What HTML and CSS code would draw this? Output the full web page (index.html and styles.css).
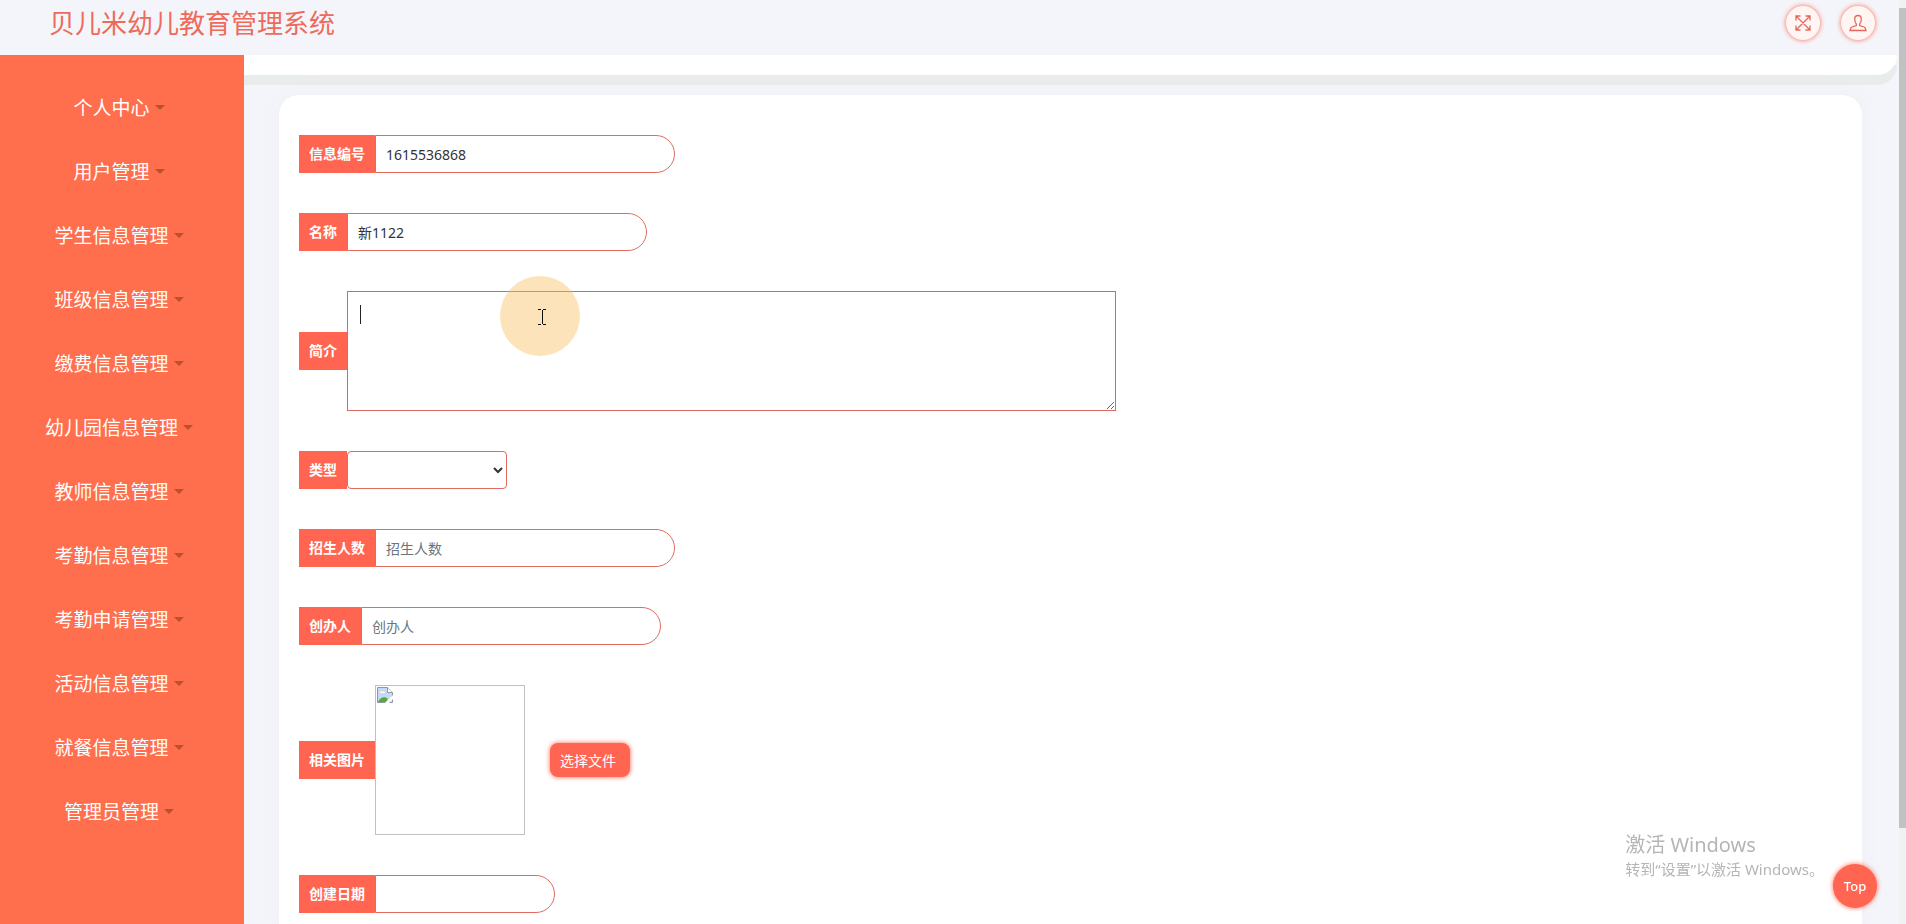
FILE: index.html
```
<!DOCTYPE html>
<html lang="zh-CN">
<head>
    <meta charset="UTF-8">
    <meta name="viewport" content="width=device-width, initial-scale=1.0">
    <title>贝儿米幼儿教育管理系统</title>
    <link rel="stylesheet" href="styles.css">
</head>
<body>
    <header class="header">
        <h1 class="brand">贝儿米幼儿教育管理系统</h1>
        <div class="header-actions">
            <button type="button" class="round-btn" aria-label="全屏">
                <svg width="16" height="16" viewBox="0 0 16 16" fill="none" stroke="currentColor" stroke-width="1.3">
                    <path d="M1.500 1.500l13 13M14.500 1.500l-13 13M1 5.500V1h4.500M10.500 1H15v4.500M15 10.500V15h-4.500M5.500 15H1v-4.500"/>
                </svg>
            </button>
            <button type="button" class="round-btn" aria-label="个人">
                <svg width="18" height="18" viewBox="0 0 18 18" fill="none" stroke="currentColor" stroke-width="1.3">
                    <path d="M9 1.500c-2.300 0-3.300 1.600-3.300 3.800 0 2 .6 3.500 1.600 4.600v1.600L3 13C1.700 13.500 1.300 14.600 1 16.500h16c-.3-1.900-.7-3-2-3.500l-4.300-1.500V9.900c1-1.100 1.600-2.600 1.600-4.600 0-2.200-1-3.800-3.300-3.800z"/>
                </svg>
            </button>
        </div>
    </header>

    <div class="wrapper">
        <nav class="sidebar">
            <a href="#" class="menu-item">个人中心</a>
            <a href="#" class="menu-item">用户管理</a>
            <a href="#" class="menu-item">学生信息管理</a>
            <a href="#" class="menu-item">班级信息管理</a>
            <a href="#" class="menu-item">缴费信息管理</a>
            <a href="#" class="menu-item">幼儿园信息管理</a>
            <a href="#" class="menu-item">教师信息管理</a>
            <a href="#" class="menu-item">考勤信息管理</a>
            <a href="#" class="menu-item">考勤申请管理</a>
            <a href="#" class="menu-item">活动信息管理</a>
            <a href="#" class="menu-item">就餐信息管理</a>
            <a href="#" class="menu-item">管理员管理</a>
        </nav>

        <main class="content">
            <div class="topbar"></div>

            <form class="card">
                <div class="form-group">
                    <label for="number">信息编号</label>
                    <input type="text" id="number" value="1615536868">
                </div>
                <div class="form-group">
                    <label for="name">名称</label>
                    <input type="text" id="name" value="新1122">
                </div>
                <div class="form-group">
                    <label for="intro">简介</label>
                    <textarea id="intro"></textarea>
                    <span class="caret"></span>
                    <span class="pointer">
                        <svg width="8" height="16" viewBox="0 0 8 16" fill="none" stroke="#111" shape-rendering="crispEdges">
                            <path d="M0 .5h3M5 .5h3M4 1v14M0 15.500h3M5 15.500h3"/>
                        </svg>
                    </span>
                </div>
                <div class="form-group">
                    <label for="type">类型</label>
                    <select id="type">
                        <option value=""></option>
                    </select>
                </div>
                <div class="form-group">
                    <label for="count">招生人数</label>
                    <input type="text" id="count" placeholder="招生人数">
                </div>
                <div class="form-group">
                    <label for="founder">创办人</label>
                    <input type="text" id="founder" placeholder="创办人">
                </div>
                <div class="form-group">
                    <label for="upload">相关图片</label>
                    <div class="preview">
                        <svg width="16" height="16" viewBox="0 0 16 16">
                            <path d="M.5.5h10l5 5v10H.5z" fill="#c6d8f5" stroke="#8f989f"/>
                            <path d="M10.500.5v5h5" fill="#fff" stroke="#8f989f"/>
                            <path d="M3 6c0-2 2-2 2.500-1C7 4 8 5 8 6z" fill="#fff"/>
                            <path d="M1 15c2-5 7-6 10-3l-2 3z" fill="#58a83d"/>
                            <path d="M8 16l8-8v4l-4 4z" fill="#fff"/>
                        </svg>
                    </div>
                    <button type="button" id="upload" class="upload-btn">选择文件</button>
                </div>
                <div class="form-group">
                    <label for="date">创建日期</label>
                    <input type="text" id="date" class="date">
                </div>
            </form>
        </main>
    </div>

    <div class="watermark">
        <p class="watermark-title">激活 Windows</p>
        <p>转到“设置”以激活 Windows。</p>
    </div>
    <button type="button" class="top-btn">Top</button>
    <div class="scrollbar"><div class="thumb"></div></div>
</body>
</html>
```

FILE: styles.css
```
* {
    box-sizing: border-box;
}

body {
    margin: 0;
    min-height: 100vh;
    display: flex;
    flex-direction: column;
    background: #f4f5fa;
    color: #333;
    font-family: "Noto Sans", "Noto Sans CJK SC", sans-serif;
    font-size: 14px;
}

button, input, select, textarea {
    font-family: inherit;
    font-size: 14px;
}

.header {
    flex: none;
    height: 55px;
    padding: 0 31px 10px 49px;
    display: flex;
    align-items: center;
    justify-content: space-between;
}

.brand {
    margin: 0;
    font-size: 26px;
    font-weight: 400;
    line-height: 40px;
    color: #ee6a5b;
}

.header-actions {
    display: flex;
    gap: 21px;
}

.round-btn {
    width: 34px;
    height: 34px;
    padding: 0;
    display: flex;
    align-items: center;
    justify-content: center;
    border: none;
    border-radius: 50%;
    background: #fff5f2;
    color: #e2695c;
    box-shadow: 0 0 5px #ff6550;
}

.wrapper {
    flex: 1;
    display: flex;
}

.sidebar {
    flex: none;
    width: 244px;
    padding: 20px 6px 0 0;
    background: #ff6e4d;
}

.menu-item {
    display: flex;
    align-items: center;
    justify-content: center;
    gap: 5px;
    height: 64px;
    color: #fff;
    font-size: 19px;
    text-decoration: none;
}

.menu-item::after {
    content: "";
    border: 5px solid transparent;
    border-top-color: #b9502f;
    border-bottom: none;
}

.content {
    flex: 1;
    min-width: 0;
    padding-right: 9px;
    display: flex;
    flex-direction: column;
}

.topbar {
    height: 20px;
    background: #fff;
    border-radius: 0 0 20px 0;
    box-shadow: 0 10px 0 #e8ecea;
}

.card {
    flex: 1;
    margin: 20px 35px 0;
    padding: 40px 20px 0;
    display: flex;
    flex-direction: column;
    gap: 40px;
    background: #fff;
    border-radius: 20px 20px 0 0;
    box-shadow: 0 0 20px #eeeff6;
}

.form-group {
    position: relative;
    display: flex;
    align-items: center;
}

.form-group label {
    height: 38px;
    padding: 0 10px;
    line-height: 38px;
    background: #ff6550;
    color: #fff;
    font-weight: bold;
}

.form-group input {
    width: 300px;
    height: 38px;
    padding: 0 10px;
    border: 1px solid #e06c60;
    border-radius: 0 20px 20px 0;
    background: #fff;
    color: #333;
    outline: none;
}

.form-group input::placeholder {
    color: #6c757d;
}

.form-group .date {
    width: 180px;
}

.form-group textarea {
    width: 769px;
    height: 120px;
    padding: 10px;
    border: 1px solid #d9695f;
    outline: none;
}

.form-group select {
    width: 160px;
    height: 38px;
    border: 1px solid #e06c60;
    border-radius: 4px;
    background: #fff;
    color: #333;
}

/* text cursor and highlighted mouse pointer over the textarea */
.caret {
    position: absolute;
    left: 61px;
    top: 14px;
    width: 1px;
    height: 19px;
    background: #222;
}

.pointer {
    position: absolute;
    left: 201px;
    top: -15px;
    width: 80px;
    height: 80px;
    padding: 2px 0 0 4px;
    display: flex;
    align-items: center;
    justify-content: center;
    border-radius: 50%;
    background: rgba(247, 188, 88, 0.42);
}

.preview {
    width: 150px;
    height: 150px;
    padding: 1px;
    border: 1px solid #c0c0c0;
}

.preview svg {
    display: block;
}

.upload-btn {
    width: 80px;
    height: 34px;
    margin-left: 25px;
    padding: 0 10px;
    border: none;
    border-radius: 8px;
    background: #ff6550;
    color: #fff;
    text-align: left;
    box-shadow: 0 0 5px #ff6550;
}

.watermark {
    position: fixed;
    right: 82px;
    bottom: 44px;
    color: #b5b5b5;
    font-size: 15px;
    line-height: 22px;
}

.watermark p {
    margin: 0;
}

.watermark .watermark-title {
    font-size: 20px;
    line-height: 26px;
}

.top-btn {
    position: fixed;
    right: 29px;
    bottom: 16px;
    width: 44px;
    height: 44px;
    padding: 0;
    border: none;
    border-radius: 50%;
    background: #ff6550;
    color: #fff;
    font-size: 13px;
    font-weight: 500;
    box-shadow: 0 0 5px #ff6550;
}

.scrollbar {
    position: fixed;
    top: 0;
    right: 0;
    bottom: 0;
    width: 7px;
    padding: 8px 0 96px;
    background: #f1f1f1;
}

.thumb {
    height: 100%;
    background: #c1c1c1;
}
```
